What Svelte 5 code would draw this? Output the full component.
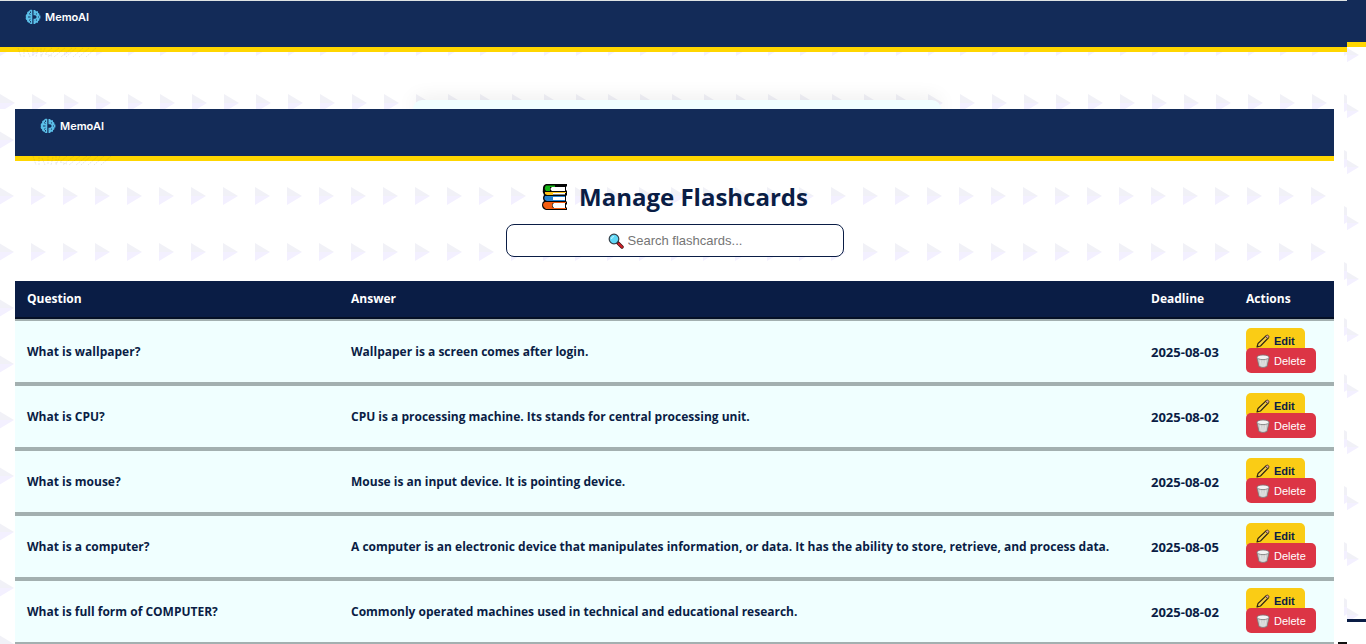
<script>
  const cards = [
    { q: 'What is wallpaper?', a: 'Wallpaper is a screen comes after login.', d: '2025-08-03' },
    { q: 'What is CPU?', a: 'CPU is a processing machine. Its stands for central processing unit.', d: '2025-08-02' },
    { q: 'What is mouse?', a: 'Mouse is an input device. It is pointing device.', d: '2025-08-02' },
    { q: 'What is a computer?', a: 'A computer is an electronic device that manipulates information, or data. It has the ability to store, retrieve, and process data.', d: '2025-08-05' },
    { q: 'What is full form of COMPUTER?', a: 'Commonly operated machines used in technical and educational research.', d: '2025-08-02' }
  ];
  let query = $state('');
  const shown = $derived(cards.filter((c) => (c.q + c.a).toLowerCase().includes(query.toLowerCase())));
</script>

{#snippet brand()}
  <header class="bar">
    <a class="brand" href="#home">
      <svg width="16" height="16" viewBox="0 0 16 16" aria-hidden="true">
        <path d="M7.3 1C5.7.4 4.5 1 4 2.200 2.500 2.300 1.800 3.500 2.200 4.800.8 5.600.4 7 1 8 .3 9.300.8 10.700 2 11.300 1.900 12.800 2.900 13.700 4.200 13.700 5 15 6.300 15.300 7.300 14.800Z" fill="#5bbfe8" />
        <path d="M8.500 1h1.500l1 1.200h2v1.600l1.400 1v1.600h1v3.200h-1v1.600l-1.400 1v1.600h-2l-1 1.200H8.500v-3.500h1.200a3.600 3.600 0 0 0 0-7H8.500Z" fill="#5bbfe8" />
        <path d="M8.500 4.200h1.200a3.600 3.600 0 0 1 0 7.600H8.500V9.800h1.300a1.800 1.800 0 0 0 0-3.600H8.500Z" fill="#5bbfe8" />
        <path d="M4 4.500l1.500 1M3 8h2.500M4 11.500l1.500-1.200M5.500 2.500v1.500M5.500 12v1.500M12 4.500l-1 .8M14 8h-1M12 11.500l-1-.8" stroke="#132b58" stroke-width=".9" />
      </svg>
      <span>MemoAI</span>
    </a>
    <svg class="texture" width="82" height="12" viewBox="0 0 82 12" aria-hidden="true">
      <path d="M2 1l3 9M8 2v8M11 3l3 7M17 1v8M22 2l-2 8M25 1v8M29 1l-4 9M36 1l-7 6 7 2M43 1L32 10M49 1L38 10M56 1L45 10M60 1L50 10M67 1L57 10M73 1L63 10M80 1L70 10" fill="none" stroke="#71716a" stroke-opacity=".16" stroke-dasharray="2 1" />
    </svg>
  </header>
{/snippet}

<div class="page">
  {@render brand()}
  <div class="corner"></div>
  <div class="frame">
    {@render brand()}
    <div class="card"></div>
    <main class="manager">
      {@render brand()}
      <h1>
        <svg width="28" height="28" viewBox="0 0 28 28" aria-hidden="true">
          <path d="M5 1H26V3L25 4V7L26 8V12L25 13V18L26 19V21L25 22V24L26 25V27H5Q1 26 1 22 1 19 3 18 1 15 3 12 1 9 2 5 2 2 5 1Z" fill="#050505" />
          <path d="M5 2.500H14V4L9 4V8H5Q3 6 4 4Z" fill="#16b516" />
          <path d="M11 4H24V8H11Q8 6 11 4Z" fill="#fff" />
          <path d="M4 9H25V10H12V12H6L4 11Z" fill="#ffc21a" />
          <path d="M12 10H24V11.500H12Z" fill="#fff" />
          <path d="M4 13H24V14H12V17H24V18H6Q2 17 4 13Z" fill="#2582d2" />
          <path d="M12 14H24V17H12Z" fill="#fff" />
          <path d="M4 19H25V20H12Q10 22 12 25H25V26H5Q2 24 2 22 2 20 4 19Z" fill="#f25d12" />
          <path d="M13 20H24V25H13Q10 22 13 20Z" fill="#fff" />
        </svg>
        Manage Flashcards
      </h1>
      <label class="search">
        {#if !query}
          <svg width="16" height="16" viewBox="0 0 16 16" aria-hidden="true">
            <path d="M9 9l5 5" stroke="#3a1010" stroke-width="3.400" stroke-linecap="round" />
            <path d="M10.500 10.500l3.500 3.500" stroke="#d3202a" stroke-width="2" stroke-linecap="round" />
            <circle cx="6" cy="6" r="4.800" fill="#5fd8f7" stroke="#35404a" stroke-width="1.200" />
            <path d="M3.500 6q0-2.500 2.500-2.500" fill="none" stroke="#c9f5ff" />
          </svg>
        {/if}
        <input type="text" aria-label="Search flashcards" placeholder="Search flashcards..." bind:value={query} />
      </label>
      <table>
        <thead>
          <tr><th class="q">Question</th><th>Answer</th><th class="d">Deadline</th><th class="act">Actions</th></tr>
        </thead>
        <tbody>
          {#each shown as c}
            <tr>
              <td>{c.q}</td>
              <td>{c.a}</td>
              <td class="date">{c.d}</td>
              <td>
                <div class="actions">
                  <button class="edit">
                    <svg width="14" height="14" viewBox="0 0 14 14" aria-hidden="true">
                      <path d="M1 13l1-3.500L10 1.800l2.200 2.200L4.500 12Z" fill="#f7cf3e" stroke="#2b2412" stroke-width="1.100" stroke-linejoin="round" />
                      <path d="M9.500 2.300l1-1q1-.6 1.900.3t.3 1.900l-1 1Z" fill="#e0a3a0" stroke="#2b2412" stroke-width=".8" />
                      <path d="M1 13l.6-2 1.400 1.400Z" fill="#2b2412" />
                    </svg>Edit</button>
                  <button class="delete">
                    <svg width="14" height="14" viewBox="0 0 14 14" aria-hidden="true">
                      <path d="M1 3.500L3 12.500q4 1.800 8 0L13 3.500Z" fill="#cfcfcf" stroke="#777" stroke-width=".8" />
                      <ellipse cx="7" cy="3.300" rx="6" ry="2.300" fill="#f4f4f4" stroke="#777" stroke-width=".8" />
                      <path d="M4.500 6.500l.8 6M7 6.500V13M9.500 6.500l-.8 6" stroke="#ececec" stroke-width=".8" />
                    </svg>Delete</button>
                </div>
              </td>
            </tr>
          {/each}
        </tbody>
      </table>
    </main>
    <div class="notch"></div>
  </div>
</div>

<style>
  :global(body) { margin: 0; }
  .page, .frame, .manager {
    --tri: url("data:image/svg+xml,%3Csvg xmlns='http://www.w3.org/2000/svg' width='32' height='56'%3E%3Cpath d='M0 0L15 9H0Z' fill='%23f1f1f7'/%3E%3Cpath d='M0 9H15L0 18Z' fill='%23f3f0ff'/%3E%3C/svg%3E");
    background: #fff var(--tri);
  }
  .page {
    display: grid;
    grid-template-columns: minmax(0, 1fr) 19px;
    height: 100vh;
    overflow: hidden;
    background-position: 0 46px;
    font-family: "Open Sans", "Noto Sans", sans-serif;
    color: #0a1d45;
  }
  .page > .bar { grid-area: 1 / 1 / 2 / 3; align-self: start; height: 42px; }
  .corner { grid-area: 1 / 2; align-self: end; height: 3px; margin-bottom: 22px; background: #0a1d45; }
  .frame {
    grid-area: 1 / 1;
    position: relative;
    min-width: 0;
    height: 100vh;
    box-sizing: border-box;
    border-top: 1px solid #dfe3e3;
    background-position: 0 37px;
    z-index: 1;
    overflow: hidden;
  }
  .notch { position: absolute; right: 0; bottom: 0; width: 9px; height: 2px; background: #111; }
  .bar { position: relative; height: 46px; background: #132b58; border-bottom: 5px solid #ffd600; }
  .texture { position: absolute; left: 16px; top: 46px; }
  .brand {
    display: flex;
    align-items: center;
    gap: 4px;
    padding: 8px 25px;
    color: #fff;
    font: 600 11px/16px Inter, sans-serif;
    text-decoration: none;
  }
  .card {
    width: 528px;
    height: 9px;
    margin: 48px auto 0;
    position: relative;
    left: 3px;
    border-radius: 12px 12px 0 0;
    background: #f0ffff;
    box-shadow: 0 0 20px rgba(0, 0, 0, .12);
  }
  .manager { position: relative; margin-right: 6px; padding: 0 7px 0 15px; background-position: -1px 22px; }
  .manager .bar { height: 47px; }
  .manager .brand { padding-top: 9px; }
  h1 {
    display: flex;
    justify-content: center;
    align-items: center;
    gap: 10px;
    margin: 18px 0 9px;
    font-size: 24px;
    line-height: 36px;
  }
  .search {
    display: flex;
    align-items: center;
    justify-content: center;
    gap: 4px;
    width: 336px;
    height: 31px;
    margin: 0 auto 24px;
    border: 1px solid #0a1d45;
    border-radius: 8px;
    background: #fff;
  }
  input {
    width: 114px;
    padding: 0;
    border: 0;
    outline: 0;
    background: transparent;
    color: #0a1d45;
    font: 13px "Liberation Sans", Arial, sans-serif;
  }
  input::placeholder { color: #757575; }
  table { width: 100%; border-collapse: separate; border-spacing: 0; table-layout: fixed; font-size: 12px; line-height: 18px; font-weight: 700; }
  th, td { padding: 0 12px; text-align: left; }
  th { height: 36px; background: #0a1d45; color: #fff; border-bottom: 2px solid #051026; }
  td { height: 61px; background: #f0ffff; border-bottom: 4px solid #a3b0b0; white-space: nowrap; }
  tbody tr:first-child td { border-top: 2px solid #a3b0b0; }
  .date { font-size: 13px; }
  .q { width: 300px; }
  .d { width: 71px; }
  .act { width: 76px; }
  .actions { display: flex; flex-direction: column; align-items: flex-start; padding-bottom: 2px; }
  button {
    display: flex;
    align-items: center;
    gap: 4px;
    height: 25px;
    padding: 0 10px;
    border: 0;
    border-radius: 5px;
    font: 11px "Liberation Sans", Arial, sans-serif;
  }
  .edit { background: #facc15; color: #0a1d45; font-weight: 700; }
  .delete { margin-top: -5px; background: #dc3545; color: #fff; position: relative; }
</style>
